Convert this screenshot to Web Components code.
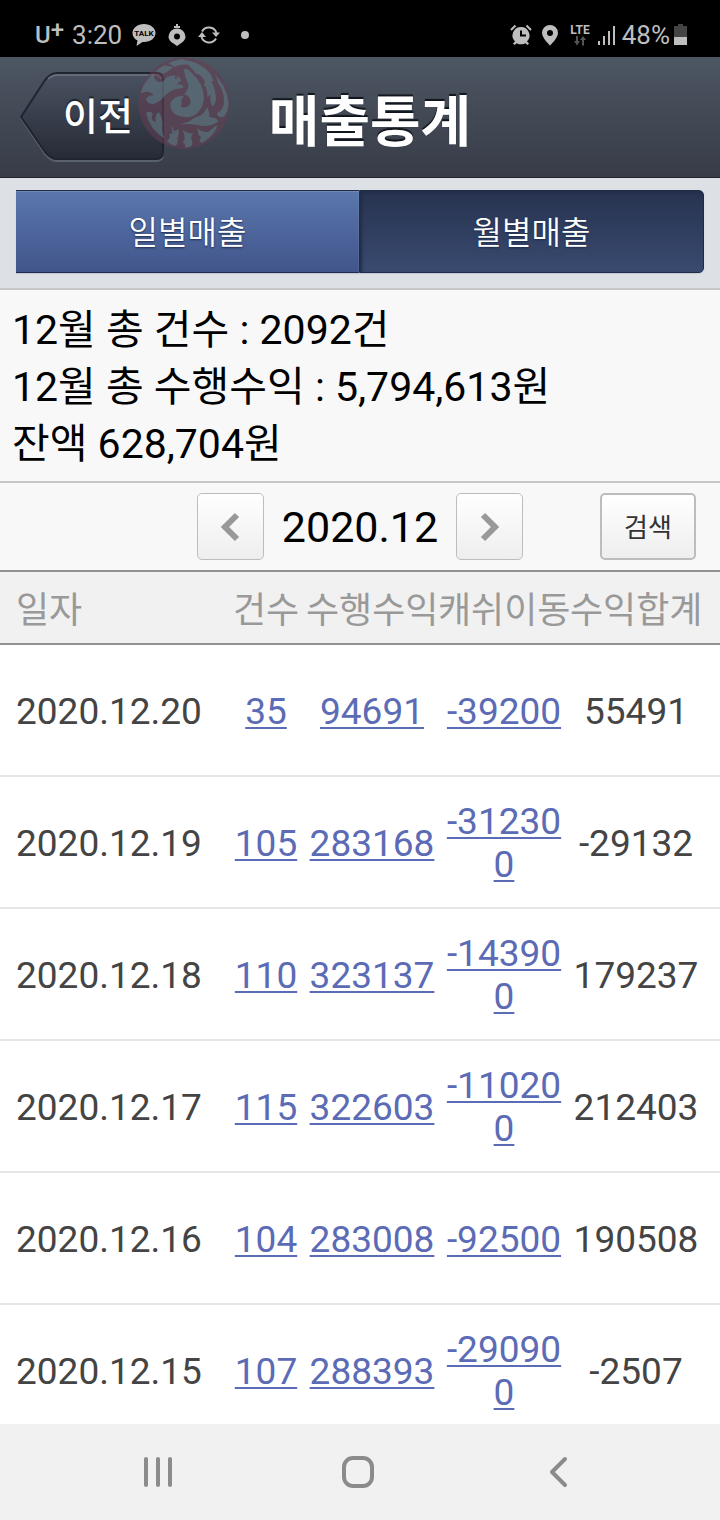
<!DOCTYPE html>
<html lang="ko">
<head>
<meta charset="utf-8">
<meta name="viewport" content="width=device-width, initial-scale=1">
<title>매출통계</title>
<style>
  html, body {
    margin: 0;
    height: 100%;
  }

  body {
    font-family: Roboto, "Noto Sans CJK KR", sans-serif;
    background: #fff;
    overflow: hidden;
  }
</style>
</head>
<body>
<sales-app></sales-app>

<script>
class StatusBar extends HTMLElement {
  constructor(){
    super();
    this.attachShadow({mode: 'open'});
  }

  connectedCallback(){
    this.shadowRoot.innerHTML = `
      <style>
        :host {
          display: flex;
          justify-content: space-between;
          align-items: center;
          box-sizing: border-box;
          height: 57px;
          padding: 12px 33px 0 35px;
          background: #000;
          color: #bebebe;
          font-size: 26px;
          line-height: 30px;
        }

        .group {
          display: flex;
          align-items: center;
        }

        .carrier {
          display: flex;
          font-weight: 500;
          font-size: 24px;
          margin-right: 8px;
        }

        .carrier sup {
          font-size: 24px;
          line-height: 20px;
          vertical-align: baseline;
        }

        svg {
          display: block;
          fill: currentColor;
        }

        .notices {
          gap: 10px;
          margin-left: 10px;
        }

        .system {
          gap: 6px;
        }

        .lte {
          margin: 0 2px;
          font-size: 12px;
          line-height: 12px;
          font-weight: 700;
        }

        .lte svg {
          margin: 0 auto;
        }

        .charge {
          display: flex;
          align-items: center;
          gap: 4px;
        }
      </style>

      <div class="group">
        <span class="carrier">U<sup>+</sup></span>
        <span>3:20</span>
        <div class="group notices">
          <svg width="24" height="24" viewBox="0 0 24 24">
            <path d="M12 1C5.500 1 .5 5 .5 10c0 3.500 2 6 5 7.500L4.500 23l6-4h1.500c6.500 0 11.500-4 11.500-9S18.500 1 12 1z"/>
            <text x="12" y="13" text-anchor="middle" font-family="Roboto" font-size="8" font-weight="700" fill="#000">TALK</text>
          </svg>
          <svg width="22" height="24" viewBox="1 0 22 24">
            <path d="M9 3h2V1h2v2h2v2H9z"/>
            <path fill-rule="evenodd" d="M12 5.500a8.500 8.500 0 0 1 8.500 8c0 3.500-2.500 5.500-5 7L12 23l-3.500-2.500c-2.500-1.500-5-3.500-5-7A8.500 8.500 0 0 1 12 5.500zm0 5a3 3 0 1 0 0 6 3 3 0 0 0 0-6z"/>
          </svg>
          <svg width="22" height="22" viewBox="0 0 22 22">
            <path d="M4 7.500A8 8 0 0 1 18.500 9M18 14.500A8 8 0 0 1 3.500 13" fill="none" stroke="currentColor" stroke-width="2"/>
            <path d="M14 8.500h8l-4 4.500zM0 13l4-5 4 5z"/>
          </svg>
          <svg width="30" height="22" viewBox="0 0 30 22"><circle cx="15" cy="11" r="4"/></svg>
        </div>
      </div>

      <div class="group system">
        <svg width="22" height="22" viewBox="0 0 22 22">
          <path fill-rule="evenodd" d="M11 3a8.500 8.500 0 0 1 6 14.500l2 2-1.500 1.500-2.200-1.800a9 9 0 0 1-8.600 0L4.500 21 3 19.500l2-2A8.500 8.500 0 0 1 11 3zM10 6.500v6h6v-2h-4v-4z"/>
          <path d="M1 6l4.500-4.500M16.500 1.500L21 6" stroke="currentColor" stroke-width="2"/>
        </svg>
        <svg width="24" height="22" viewBox="0 0 24 22">
          <path fill-rule="evenodd" d="M12 1a8 8 0 0 1 8 8c0 5-8 12.500-8 12.500S4 14 4 9a8 8 0 0 1 8-8zm0 5a3 3 0 1 0 0 6 3 3 0 0 0 0-6z"/>
        </svg>
        <div class="lte">LTE
          <svg width="14" height="10" viewBox="0 0 14 10">
            <path fill="#555" d="M3 0h2v5h2L4 9.500 1 5h2zM9 9.500V4H7l3-4 3 4h-2v5.500z"/>
          </svg>
        </div>
        <svg width="18" height="22" viewBox="0 0 18 22">
          <path d="M0 17h2v4H0zM5 12h2v9H5zM10 7h2v14h-2zM15 2h2v19h-2z"/>
        </svg>
        <div class="charge">
          <span>48%</span>
          <svg width="13" height="22" viewBox="0 0 13 22">
            <path fill="#444" d="M4 0h5v2h4v11H0V2h4z"/>
            <path d="M0 13h13v8H0z"/>
          </svg>
        </div>
      </div>
    `;
  }
}

class BackButton extends HTMLElement {
  constructor(){
    super();
    this.attachShadow({mode: 'open'});
  }

  connectedCallback(){
    this.shadowRoot.innerHTML = `
      <style>
        :host {
          display: block;
        }

        button {
          position: relative;
          display: block;
          width: 100%;
          height: 92px;
          padding: 0 0 8px 12px;
          border: 0;
          background: none;
          color: #fff;
          font: inherit;
          font-size: 38px;
          font-weight: 500;
          text-shadow: 0 -2px 1px #1d222b;
          cursor: pointer;
        }

        svg {
          position: absolute;
          left: 0;
          top: 0;
        }

        span {
          position: relative;
        }
      </style>

      <button type="button">
        <svg width="146" height="92" viewBox="0 0 146 92" fill="none">
          <defs>
            <linearGradient id="face" x1="0" y1="0" x2="0" y2="1">
              <stop offset="0" stop-color="#4a5261"/>
              <stop offset="1" stop-color="#272a36"/>
            </linearGradient>
          </defs>
          <path d="M1 47.500L25 11Q31 4 37 4H136Q143 4 143 11V83Q143 90 136 90H37Q31 90 25 83z" stroke="#59616d" stroke-width="2"/>
          <path d="M1 46L25 9Q31 2 37 2H136Q143 2 143 9V81Q143 88 136 88H37Q31 88 25 81z" fill="url(#face)" stroke="#1e2430" stroke-width="2"/>
          <path d="M28 8Q33 4 37 4H136Q140 4 141 8" stroke="#646c78" stroke-width="2"/>
        </svg>
        <span><slot></slot></span>
      </button>
    `;
  }
}

class SwirlMark extends HTMLElement {
  constructor(){
    super();
    this.attachShadow({mode: 'open'});
  }

  connectedCallback(){
    this.shadowRoot.innerHTML = `
      <style>
        :host {
          display: block;
          opacity: .75;
          pointer-events: none;
        }

        svg {
          display: block;
        }
      </style>

      <svg width="100" height="100" viewBox="0 0 300 300">
        <circle cx="150" cy="148" r="137" fill="#683e52" fill-opacity=".7"/>
        <g fill="#5d6f7a">
          <path d="M20 118Q28 84 60 58Q58 80 74 84Q92 84 98 70Q112 62 130 66Q142 74 140 82Q130 86 128 92Q146 88 148 102Q118 102 98 120Q80 142 60 150Q38 150 36 136Q42 122 60 124Q44 106 20 118z"/>
          <path d="M64 54Q78 40 92 34Q104 38 118 38Q104 52 88 60Q76 52 64 54z"/>
          <path d="M104 28Q126 16 148 16Q156 22 162 32Q140 30 122 38Q112 34 104 28z"/>
          <path d="M138 17Q192 18 228 58L240 82L232 80Q246 112 246 138Q244 150 236 158Q226 140 230 122L220 128Q222 104 208 90L214 86Q204 62 184 58Q168 30 138 17z"/>
          <path d="M150 44Q164 44 176 60Q210 90 210 136Q204 172 178 186Q150 196 122 180Q102 160 112 142Q124 124 150 126Q138 136 144 150Q136 152 144 160Q168 162 170 142Q168 126 150 120Q166 108 162 88Q152 70 150 44z"/>
          <path d="M232 52Q278 92 284 146Q282 180 266 190Q246 188 250 176Q270 168 270 140Q270 110 252 88Q250 68 232 52z"/>
          <path d="M184 190Q212 184 218 160Q228 172 226 190Q246 190 254 202Q224 224 186 212Q156 208 136 212Q164 206 184 190z"/>
          <path d="M36 176Q54 168 56 182Q46 198 66 204Q60 184 74 174Q84 186 86 210Q82 234 92 254Q46 226 36 176z"/>
          <path d="M110 212L122 232L134 224Q136 242 130 254Q134 268 124 276Q108 272 98 262Q112 252 106 240L116 238z"/>
          <path d="M146 228Q164 240 178 238Q168 248 174 260Q178 272 166 280H152Q156 270 146 264Q158 256 146 228z"/>
          <path d="M190 222Q204 236 222 234L250 212Q246 240 206 266Q196 266 196 258Q206 250 194 244z"/>
        </g>
        <circle cx="126" cy="71" r="4" fill="#6a4258"/>
      </svg>
    `;
  }
}

class TitleBar extends HTMLElement {
  constructor(){
    super();
    this.attachShadow({mode: 'open'});
  }

  connectedCallback(){
    this.shadowRoot.innerHTML = `
      <style>
        :host {
          position: relative;
          display: grid;
          grid-template-columns: 144px 1fr 144px;
          align-items: center;
          box-sizing: border-box;
          height: 121px;
          padding-left: 20px;
          background: linear-gradient(#4d5663, #373c47);
          border-bottom: 1px solid #1d232c;
        }

        h1 {
          margin: 0;
          padding-top: 10px;
          color: #fff;
          font-size: 55px;
          line-height: 80px;
          font-weight: 700;
          text-align: center;
          text-shadow: 0 -2px 1px #11151b;
        }

        swirl-mark {
          position: absolute;
          left: 134px;
          top: -3px;
        }
      </style>

      <back-button>이전</back-button>
      <h1><slot></slot></h1>
      <swirl-mark></swirl-mark>
    `;
  }
}

class PeriodTabs extends HTMLElement {
  constructor(){
    super();
    this.attachShadow({mode: 'open'});
  }

  connectedCallback(){
    this.shadowRoot.innerHTML = `
      <style>
        :host {
          display: flex;
          padding: 12px 16px 15px;
          background: #dde0e5;
          border-bottom: 2px solid #c6c6c8;
        }

        button {
          flex: 1;
          box-sizing: border-box;
          height: 83px;
          padding: 0 0 4px;
          border: solid #1f2c48;
          border-width: 1px 0;
          background: linear-gradient(#5a77ac, #41558b);
          box-shadow: inset 0 1px #7189b2, 0 1px 1px #c3cad6;
          color: #fff;
          font: inherit;
          font-size: 32px;
          font-weight: 350;
          text-shadow: 0 1px 2px #1e2b4a;
          cursor: pointer;
        }

        button[aria-pressed="true"] {
          border-radius: 0 5px 5px 0;
          border-width: 1px;
          background: linear-gradient(#27334f, #394a70);
          box-shadow: inset 2px 2px 3px #222d47, 0 1px 1px #c3cad6;
        }
      </style>

      <button type="button" aria-pressed="false">일별매출</button>
      <button type="button" aria-pressed="true">월별매출</button>
    `;

    const buttons = [...this.shadowRoot.querySelectorAll('button')];
    buttons[0].onclick = () => this.dispatchEvent(new CustomEvent('period', {detail: 'day'}));
    buttons[1].onclick = () => this.dispatchEvent(new CustomEvent('period', {detail: 'month'}));
  }
}

class SalesSummary extends HTMLElement {
  constructor(){
    super();
    this.attachShadow({mode: 'open'});
  }

  connectedCallback(){
    this.shadowRoot.innerHTML = `
      <style>
        :host {
          display: block;
          padding: 12px 12px 8px;
          background: #f8f8f8;
          border-bottom: 2px solid #c6c6c6;
          color: #000;
          font-size: 41px;
          line-height: 57px;
        }

        ::slotted(p) {
          margin: 0;
        }
      </style>

      <slot></slot>
    `;
  }
}

class MonthPicker extends HTMLElement {
  #year = 2020;
  #month = 12;

  constructor(){
    super();
    this.attachShadow({mode: 'open'});
  }

  connectedCallback(){
    this.shadowRoot.innerHTML = `
      <style>
        :host {
          display: grid;
          grid-template-columns: 1fr auto 1fr;
          align-items: center;
          padding: 10px 24px;
          background: #f8f8f8;
          border-bottom: 2px solid #919191;
        }

        .picker {
          grid-column: 2;
          display: flex;
          align-items: center;
          gap: 18px;
        }

        output {
          color: #000;
          font-size: 43px;
          line-height: 60px;
        }

        button {
          box-sizing: border-box;
          height: 67px;
          padding: 0;
          border: 1px solid #bdbdbd;
          border-radius: 5px;
          background: linear-gradient(#fff, #eee);
          color: #333;
          font: inherit;
          cursor: pointer;
        }

        .step {
          display: flex;
          align-items: center;
          justify-content: center;
          width: 67px;
        }

        .search {
          justify-self: end;
          width: 96px;
          padding-bottom: 2px;
          border-width: 2px;
          font-size: 26px;
        }

        path {
          fill: none;
          stroke: #999;
          stroke-width: 6;
        }
      </style>

      <div class="picker">
        <button type="button" class="step prev" aria-label="이전 달">
          <svg width="20" height="30" viewBox="0 0 20 30"><path d="M17 3L5 15L17 27"/></svg>
        </button>
        <output>${this.#year}.${this.#month}</output>
        <button type="button" class="step next" aria-label="다음 달">
          <svg width="20" height="30" viewBox="0 0 20 30"><path d="M3 3L15 15L3 27"/></svg>
        </button>
      </div>
      <button type="button" class="search">검색</button>
    `;

    this.shadowRoot.querySelector('.prev').onclick = this.step.bind(this, -1);
    this.shadowRoot.querySelector('.next').onclick = this.step.bind(this, 1);
  }

  step(by){
    const date = new Date(this.#year, this.#month - 1 + by);
    this.#year = date.getFullYear();
    this.#month = date.getMonth() + 1;
    const month = String(this.#month).padStart(2, '0');
    this.shadowRoot.querySelector('output').textContent = `${this.#year}.${month}`;
  }
}

class SalesTable extends HTMLElement {
  #rows = [
    ['2020.12.20', 35, 94691, -39200, 55491],
    ['2020.12.19', 105, 283168, -312300, -29132],
    ['2020.12.18', 110, 323137, -143900, 179237],
    ['2020.12.17', 115, 322603, -110200, 212403],
    ['2020.12.16', 104, 283008, -92500, 190508],
    ['2020.12.15', 107, 288393, -290900, -2507]
  ];

  constructor(){
    super();
    this.attachShadow({mode: 'open'});
  }

  connectedCallback(){
    this.shadowRoot.innerHTML = `
      <style>
        :host {
          display: block;
        }

        table {
          width: 100%;
          table-layout: fixed;
          border-spacing: 0;
          color: #444;
          font-size: 37px;
          line-height: 43px;
        }

        .count {
          width: 80px;
        }

        .amount {
          width: 132px;
        }

        .total {
          width: 150px;
        }

        th {
          box-sizing: border-box;
          height: 73px;
          padding: 8px 0 0;
          background: #f1f1f1;
          border-bottom: 2px solid #919191;
          color: #999;
          font-size: 36px;
          font-weight: 400;
          white-space: nowrap;
        }

        td {
          box-sizing: border-box;
          height: 132px;
          padding: 2px 0 0;
          border-bottom: 2px solid #e6e6e6;
          text-align: center;
          word-break: break-all;
        }

        th:first-child, td:first-child {
          padding-left: 16px;
          text-align: left;
        }

        th:last-child, td:last-child {
          padding-right: 18px;
        }

        a {
          color: #5c6bb5;
          text-decoration-thickness: 2px;
          text-underline-offset: 3px;
        }
      </style>

      <table>
        <colgroup>
          <col>
          <col class="count">
          <col class="amount">
          <col class="amount">
          <col class="total">
        </colgroup>
        <thead>
          <tr><th>일자</th><th>건수</th><th>수행수익</th><th>캐쉬이동</th><th>수익합계</th></tr>
        </thead>
        <tbody>
          ${this.#rows.map(([date, count, income, cash, total]) => `
            <tr>
              <td>${date}</td>
              <td><a href="#count-${date}">${count}</a></td>
              <td><a href="#income-${date}">${income}</a></td>
              <td><a href="#cash-${date}">${cash}</a></td>
              <td>${total}</td>
            </tr>
          `).join('')}
        </tbody>
      </table>
    `;
  }
}

class NavBar extends HTMLElement {
  constructor(){
    super();
    this.attachShadow({mode: 'open'});
  }

  connectedCallback(){
    this.shadowRoot.innerHTML = `
      <style>
        :host {
          display: flex;
          justify-content: center;
          height: 96px;
          padding-right: 4px;
          background: #f1f1f1;
        }

        button {
          display: flex;
          align-items: center;
          justify-content: center;
          width: 28%;
          padding: 0;
          border: 0;
          background: none;
          cursor: pointer;
        }

        svg {
          fill: none;
          stroke: #8b8b8b;
          stroke-width: 4;
          stroke-linecap: round;
          stroke-linejoin: round;
        }
      </style>

      <button type="button" aria-label="최근 앱">
        <svg width="32" height="34" viewBox="0 0 32 34"><path d="M4 4V30M16 4V30M28 4V30"/></svg>
      </button>
      <button type="button" aria-label="홈">
        <svg width="34" height="34" viewBox="0 0 34 34"><rect x="3" y="3" width="28" height="28" rx="9"/></svg>
      </button>
      <button type="button" aria-label="뒤로">
        <svg width="32" height="34" viewBox="0 0 32 34"><path d="M23 4L10 17L23 30"/></svg>
      </button>
    `;
  }
}

class SalesApp extends HTMLElement {
  constructor(){
    super();
    this.attachShadow({mode: 'open'});
  }

  connectedCallback(){
    this.shadowRoot.innerHTML = `
      <style>
        :host {
          display: flex;
          flex-direction: column;
          height: 100vh;
        }

        main {
          flex: 1;
          min-height: 0;
          overflow: hidden;
        }
      </style>

      <status-bar></status-bar>
      <main>
        <title-bar>매출통계</title-bar>
        <period-tabs></period-tabs>
        <sales-summary>
          <p>12월 총 건수 : 2092건</p>
          <p>12월 총 수행수익 : 5,794,613원</p>
          <p>잔액 628,704원</p>
        </sales-summary>
        <month-picker></month-picker>
        <sales-table></sales-table>
      </main>
      <nav-bar></nav-bar>
    `;
  }
}

customElements.define('status-bar', StatusBar);
customElements.define('back-button', BackButton);
customElements.define('swirl-mark', SwirlMark);
customElements.define('title-bar', TitleBar);
customElements.define('period-tabs', PeriodTabs);
customElements.define('sales-summary', SalesSummary);
customElements.define('month-picker', MonthPicker);
customElements.define('sales-table', SalesTable);
customElements.define('nav-bar', NavBar);
customElements.define('sales-app', SalesApp);
</script>
</body>
</html>
